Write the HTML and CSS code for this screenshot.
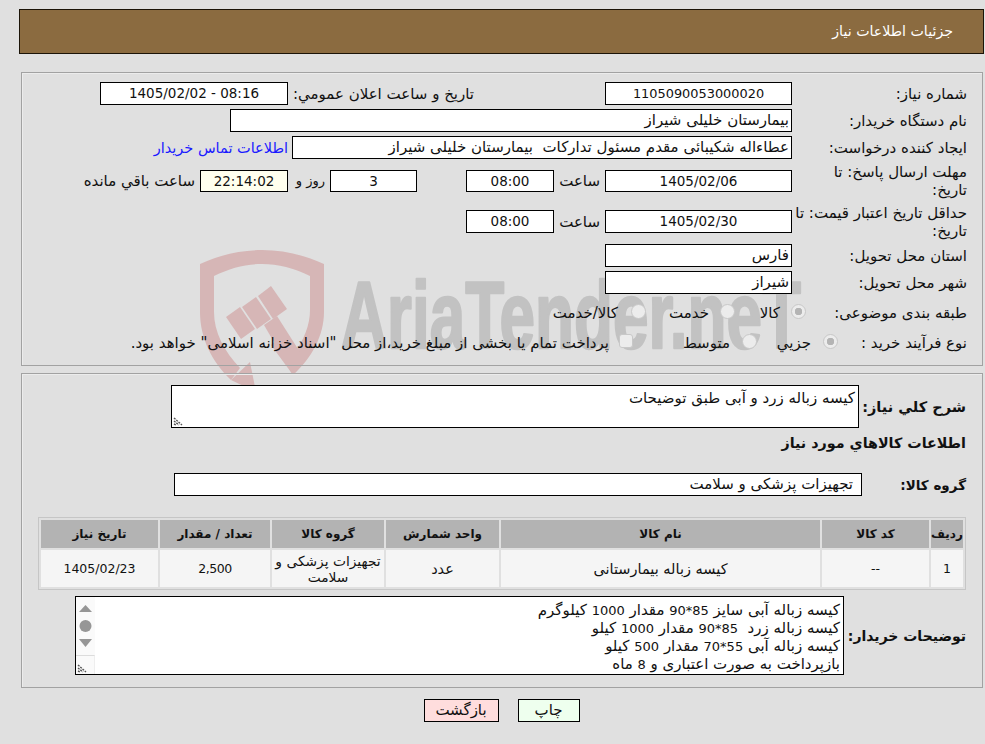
FILE: index.html
```html
<!DOCTYPE html>
<html lang="fa" dir="rtl">
<head>
<meta charset="utf-8">
<title>جزئيات اطلاعات نياز</title>
<link rel="stylesheet" href="styles.css">
</head>
<body>
<svg class="watermark" viewBox="0 0 985 744" aria-hidden="true">
  <g class="wm-red">
    <path fill-rule="evenodd" d="M200 264C220 255 240 250 262 250C284 250 304 255 324 264V312C324 335 312 358 293 375L271 345L283 333L293 355C304 340 310 325 310 310V276C294 268 278 264 262 264C246 264 230 268 214 276V312C214 332 224 351 240 368L231 380C212 362 200 338 200 312Z"/>
    <polygon points="226,317 240,307 255,329 241,339"/>
    <polygon points="242,307 256,297 271,319 257,329"/>
    <polygon points="258,296 271,286 287,309 273,319"/>
    <polygon points="264,325 277,316 305,360 293,375"/>
    <polygon points="250,362 231,380 256,392"/>
  </g>
  <text class="wm-text" x="341" y="348" textLength="460" lengthAdjust="spacingAndGlyphs">AriaTender.neT</text>
</svg>
<div class="page">
  <header class="title-bar">جزئيات اطلاعات نياز</header>

  <section class="panel panel-form">
    <div class="row h23">
      <span class="label">شماره نياز:</span>
      <div class="box w187 center num long">1105090053000020</div>
      <span class="plain pub-label">تاريخ و ساعت اعلان عمومي:</span>
      <div class="box w188 center num" dir="ltr">1405/02/02 - 08:16</div>
    </div>
    <div class="row h23">
      <span class="label">نام دستگاه خريدار:</span>
      <div class="box w562">بیمارستان خلیلی شیراز</div>
    </div>
    <div class="row h23 tall-after">
      <span class="label">ایجاد کننده درخواست:</span>
      <div class="box w500">عطاءاله شکیبائی مقدم مسئول تدارکات&nbsp; بیمارستان خلیلی شیراز</div>
      <a class="link" href="#">اطلاعات تماس خریدار</a>
    </div>
    <div class="row h36">
      <span class="label">مهلت ارسال پاسخ: تا تاریخ:</span>
      <div class="box w187 h22 center num">1405/02/06</div>
      <span class="plain hour">ساعت</span>
      <div class="box w88 h22 center num">08:00</div>
      <div class="box w87 h22 center num days">3</div>
      <span class="plain day-label">روز و</span>
      <div class="box w88 h22 center num yellow">22:14:02</div>
      <span class="plain left-label">ساعت باقي مانده</span>
    </div>
    <div class="row h37">
      <span class="label">حداقل تاریخ اعتبار قیمت: تا تاریخ:</span>
      <div class="box w187 center num">1405/02/30</div>
      <span class="plain hour">ساعت</span>
      <div class="box w88 center num">08:00</div>
    </div>
    <div class="row h23">
      <span class="label">استان محل تحویل:</span>
      <div class="box w187">فارس</div>
    </div>
    <div class="row h23">
      <span class="label">شهر محل تحویل:</span>
      <div class="box w187">شیراز</div>
    </div>
    <div class="row choice">
      <span class="label l161">طبقه بندی موضوعی:</span>
      <input class="opt" type="radio" name="cat" checked disabled aria-label="کالا"><span class="plain t-kala">کالا</span>
      <input class="opt" type="radio" name="cat" disabled aria-label="خدمت"><span class="plain t-khedmat">خدمت</span>
      <input class="opt" type="radio" name="cat" disabled aria-label="کالا/خدمت"><span class="plain t-both">کالا/خدمت</span>
    </div>
    <div class="row choice">
      <span class="label l129">نوع فرآیند خرید :</span>
      <input class="opt" type="radio" name="proc" checked disabled aria-label="جزيي"><span class="plain t-joz">جزيي</span>
      <input class="opt" type="radio" name="proc" disabled aria-label="متوسط"><span class="plain t-mot">متوسط</span>
      <input class="opt square" type="checkbox" disabled aria-label="پرداخت"><span class="plain t-pay">پرداخت تمام یا بخشی از مبلغ خرید،از محل "اسناد خزانه اسلامی" خواهد بود.</span>
    </div>
  </section>

  <section class="panel panel-items">
    <div class="desc-row">
      <span class="bold-label l107 big">شرح كلي نياز:</span>
      <div class="area">
        <span class="area-text">کیسه زباله زرد و آبی طبق توضیحات</span>
        <svg class="grip" viewBox="0 0 10 10" aria-hidden="true"><path d="M1 2L9 9M1 5L6 9M1 8L3 9"/></svg>
      </div>
    </div>
    <h2 class="section-title">اطلاعات كالاهاي مورد نياز</h2>
    <div class="group-row">
      <span class="bold-label l104">گروه کالا:</span>
      <div class="box group-box">تجهیزات پزشکی و سلامت</div>
    </div>
    <table class="items">
      <colgroup>
        <col class="c1"><col class="c2"><col class="c3"><col class="c4"><col class="c5"><col class="c6"><col class="c7">
      </colgroup>
      <thead>
        <tr><th>ردیف</th><th>کد کالا</th><th>نام کالا</th><th>واحد شمارش</th><th>گروه کالا</th><th>تعداد / مقدار</th><th>تاریخ نیاز</th></tr>
      </thead>
      <tbody>
        <tr><td class="tnum">1</td><td class="tnum">--</td><td>کیسه زباله بیمارستانی</td><td>عدد</td><td class="tight">تجهیزات پزشکی و سلامت</td><td class="tnum squeeze">2,500</td><td class="tnum">1405/02/23</td></tr>
      </tbody>
    </table>
    <div class="notes-row">
      <span class="bold-label l122">توضیحات خریدار:</span>
      <div class="notes">
        <div class="notes-text">کیسه زباله آبی سایز <span class="n">85*90</span> مقدار <span class="n">1000</span> کیلوگرم<br>کیسه زباله زرد&nbsp; <span class="n">85*90</span> مقدار <span class="n">1000</span> کیلو<br>کیسه زباله آبی <span class="n">55*70</span> مقدار <span class="n">500</span> کیلو<br>بازپرداخت به صورت اعتباری و <span class="n">8</span> ماه</div>
        <div class="scroll" aria-hidden="true">
          <svg class="scroll-track" viewBox="0 0 19 50"><path d="M3 15L9.500 8L16 15Z"/><circle cx="9.500" cy="29" r="6"/><path d="M3 42L9.500 50L16 42Z"/></svg>
          <div class="scroll-corner"><svg class="grip-small" viewBox="0 0 10 10"><path d="M1 2L9 9M1 5L6 9M1 8L3 9"/></svg></div>
        </div>
      </div>
    </div>
  </section>

  <div class="actions">
    <button class="btn btn-print" type="button">چاپ</button>
    <button class="btn btn-back" type="button">بازگشت</button>
  </div>
</div>
</body>
</html>
```
FILE: styles.css
```css
html, body { margin: 0; padding: 0; height: 744px; overflow: hidden; }
body { background: #e0e0e0; color: #111; font: 15px/18px "DejaVu Sans", sans-serif; position: relative; }
.watermark { position: absolute; left: 0; top: 0; width: 985px; height: 744px; }
.wm-red { fill: #d6b6b6; }
.wm-text { fill: #c2c2c2; stroke: #c2c2c2; stroke-width: 2.500px; stroke-linejoin: round; font: bold 94px "Liberation Sans", sans-serif; direction: ltr; }
.page { position: relative; display: flow-root; }
.title-bar { margin: 9px 1px 0 19px; height: 43px; line-height: 43px; background: #8b6b40; border: 1px solid #1c1408; color: #fff; padding-right: 30px; font-size: 14.200px; }
.panel { border: 1px solid #a2a2a2; box-shadow: inset 1px 1px 0 #ececec; box-sizing: border-box; }
.panel-form { height: 294px; margin: 18px 2px 0 21px; padding: 9px 15px 0 0; }
.panel-items { height: 315px; margin: 7px 2px 0 21px; padding: 11px 16px 0 15px; }
.row { display: flex; align-items: center; margin-bottom: 4px; }
.h23 { height: 23px; }
.h36 { height: 36px; }
.h37 { height: 37px; }
.label { width: 175px; flex: none; line-height: 18px; padding-left: 3px; box-sizing: border-box; }
.l161 { width: 161px; }
.l129 { width: 129px; }
.box { height: 23px; background: #fff; border: 1px solid #000; box-sizing: border-box; line-height: 21px; padding: 0 2px; white-space: nowrap; overflow: hidden; flex: none; }
.h22 { height: 22px; }
.w187 { width: 187px; }
.w188 { width: 188px; }
.w88 { width: 88px; }
.w87 { width: 87px; }
.w500 { width: 500px; }
.w562 { width: 562px; }
.center { text-align: center; }
.num { font-size: 13.500px; }
.long { font-size: 12.900px; }
.n { font-size: 13px; line-height: 1; }
.yellow { background: #ffffee; }
.plain { flex: none; white-space: nowrap; }
.pub-label { margin: 0 131px 0 5px; width: 181px; }
.link { color: #1a1aff; text-decoration: none; margin-right: 4px; white-space: nowrap; font-size: 14.500px; }
.hour { width: 41px; margin: 0 5px; }
.days { margin-right: 49px; }
.day-label { width: 28px; margin: 0 5px 0 9px; font-size: 13px; }
.left-label { margin-right: 5px; }
.choice { height: 30px; margin-bottom: 0; }
.opt { appearance: none; -webkit-appearance: none; flex: none; width: 15px; height: 15px; margin: -4px 0 0; border-radius: 50%; border: 1px solid #c8c8c8; background: #ececec; box-sizing: border-box; }
.opt:checked { background: radial-gradient(circle, #b4b4b4 0 3.500px, #ececec 4px); }
.square { border-radius: 3px; width: 14px; height: 14px; }
.t-kala { margin-right: 11px; width: 45px; }
.t-khedmat { margin-right: 11px; width: 63px; }
.t-both { margin-right: 13px; }
.t-joz { margin-right: 12px; width: 54px; }
.t-mot { margin-right: 12px; width: 97px; }
.t-pay { margin-right: 10px; }
.desc-row, .group-row, .notes-row { display: flex; align-items: center; }
.bold-label { font-weight: bold; flex: none; font-size: 14px; }
.big { font-size: 14.500px; }
.l107 { width: 107px; }
.l104 { width: 104px; font-size: 13.500px; }
.l122 { width: 122px; }
.area { flex: none; width: 688px; height: 43px; position: relative; background: #fff; border: 1px solid #000; box-sizing: border-box; padding: 3px 3px; }
.area-text { display: block; }
.grip { position: absolute; left: 1px; bottom: 1px; width: 10px; height: 10px; }
.grip path, .grip-small path { fill: none; stroke: #555; stroke-width: 1.400; stroke-dasharray: 2 1; }
.section-title { font-size: 14.300px; font-weight: bold; line-height: 18px; margin: 6px 0 21px; }
.group-box { width: 688px; padding-right: 8px; }
.items { width: 928px; margin: 21px 0 6px 0; border: 1px solid #c6c6c6; border-spacing: 2px; table-layout: fixed; border-collapse: separate; }
.items th { height: 28px; padding: 0; background: #b3b3b3; font-size: 12px; font-weight: bold; }
.items td { height: 37px; padding: 0; background: #f5f5f5; text-align: center; line-height: 16px; font-size: 14.500px; }
.items td.tight { padding: 0 2px; font-size: 13.800px; }
.items td.tnum { font-size: 12.500px; }
.items td.squeeze { letter-spacing: -0.500px; }
.c1 { width: 32px; }
.c2 { width: 107px; }
.c3 { width: 319px; }
.c4 { width: 113px; }
.c5 { width: 112px; }
.c6 { width: 110px; }
.c7 { width: 117px; }
.notes { flex: none; width: 769px; height: 79px; background: #fff; border: 1px solid #000; box-sizing: border-box; display: flex; }
.notes-text { flex: 1; padding: 4px 3px 0 0; line-height: 18px; white-space: nowrap; overflow: hidden; }
.scroll { width: 19px; flex: none; background: #fafafa; display: flex; flex-direction: column; }
.scroll-track { width: 19px; height: 50px; flex: none; fill: #969696; }
.scroll-corner { margin-top: 8px; flex: 1; border-top: 1px solid #dcdcdc; border-right: 1px solid #eee; position: relative; }
.grip-small { position: absolute; left: 1px; bottom: 1px; width: 10px; height: 10px; }
.actions { display: flex; justify-content: center; gap: 19px; margin-top: 11px; padding-left: 18px; }
.btn { width: 62px; height: 23px; padding: 0; border: 1px solid #000; font: 15px/19px "DejaVu Sans", sans-serif; color: #111; background: #eeffee; }
.btn-back { width: 75px; background: #ffdddd; }
```
